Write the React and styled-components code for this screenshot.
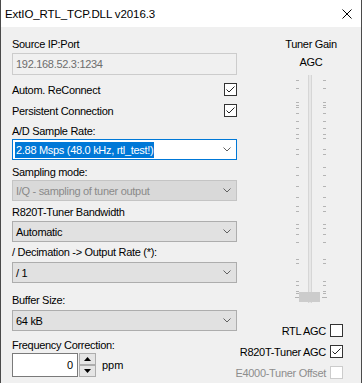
import styled, { createGlobalStyle } from "styled-components";

const GlobalStyle = createGlobalStyle`
  html, body {
    margin: 0;
    padding: 0;
    background: #f0f0f0;
  }
  body {
    font-family: "Liberation Sans", Arial, sans-serif;
    font-size: 11px;
    color: #000;
  }
`;

const Window = styled.div`
  width: 362px;
  height: 383px;
  box-sizing: border-box;
  border-left: 1px solid #4a4a4a;
  border-right: 1px solid #4a4a4a;
  background: #f0f0f0;
  display: flex;
  flex-direction: column;
  overflow: hidden;
`;

const TitleBar = styled.div`
  height: 27px;
  flex: none;
  background: #fff;
  display: flex;
  align-items: center;
  justify-content: space-between;
  padding: 0 9px 0 4px;
  font-size: 11.5px;
  letter-spacing: -0.1px;
`;

const Body = styled.div`
  flex: 1;
  display: flex;
  flex-direction: row;
  padding-left: 11px;
  min-height: 0;
`;

const LeftCol = styled.div`
  width: 225px;
  flex: none;
  display: flex;
  flex-direction: column;
`;

const RightCol = styled.div`
  flex: 1;
  min-width: 0;
  display: flex;
  flex-direction: column;
`;

const Label = styled.div`
  height: 16px;
  line-height: 16px;
  margin-top: ${(p) => p.$mt || 0}px;
  letter-spacing: -0.3px;
  white-space: nowrap;
  color: ${(p) => (p.$disabled ? "#8d8d8d" : "#000")};
`;

const TextBox = styled.div`
  height: 22px;
  margin-top: ${(p) => p.$mt || 0}px;
  box-sizing: border-box;
  border: 1px solid #cccccc;
  background: #f0f0f0;
  color: #6d6d6d;
  padding-left: 3px;
  display: flex;
  align-items: center;
  letter-spacing: -0.3px;
`;

const CheckRow = styled.div`
  height: 21px;
  margin-top: ${(p) => p.$mt || 0}px;
  display: flex;
  align-items: center;
  justify-content: ${(p) => (p.$end ? "flex-end" : "space-between")};
  gap: 4px;
  white-space: nowrap;
  letter-spacing: -0.3px;
  padding-right: ${(p) => (p.$end ? 18 : 0)}px;
`;

const Box = styled.span`
  width: 13px;
  height: 13px;
  box-sizing: border-box;
  border: 1px solid ${(p) => (p.$disabled ? "#cccccc" : "#333333")};
  background: #fff;
  flex: none;
  display: flex;
`;

const Combo = styled.div`
  height: 21px;
  margin-top: ${(p) => p.$mt || 0}px;
  box-sizing: border-box;
  border: 1px solid ${(p) => (p.$focus ? "#0078d7" : p.$disabled ? "#c4c4c4" : "#adadad")};
  background: ${(p) => (p.$focus ? "#fff" : p.$disabled ? "#d9d9d9" : "#e1e1e1")};
  color: ${(p) => (p.$disabled ? "#8a8a8a" : "#000")};
  display: flex;
  align-items: center;
  justify-content: space-between;
  padding: 0 5px 0 3px;
  letter-spacing: -0.3px;
  white-space: nowrap;
`;

const Highlight = styled.span`
  background: #0078d7;
  color: #fff;
  margin-left: -1px;
  padding: 1px 1px;
  line-height: 14px;
`;

const SpinRow = styled.div`
  display: flex;
  align-items: center;
  height: 24px;
`;

const SpinInput = styled.div`
  width: 66px;
  height: 24px;
  box-sizing: border-box;
  border: 1px solid #7a7a7a;
  background: #fff;
  display: flex;
  align-items: center;
  justify-content: flex-end;
  padding-right: 4px;
`;

const SpinButtons = styled.div`
  width: 17px;
  height: 24px;
  margin-left: 1px;
  display: flex;
  flex-direction: column;
`;

const SpinBtn = styled.div`
  flex: 1;
  box-sizing: border-box;
  border: 1px solid #adadad;
  background: #e5e5e5;
  display: flex;
  align-items: center;
  justify-content: center;
`;

const Unit = styled.span`
  margin-left: 6px;
`;

const GainBlock = styled.div`
  padding-left: 24px;
  display: flex;
  flex-direction: column;
  align-items: center;
`;

const CheckGroup = styled.div`
  margin-top: auto;
  display: flex;
  flex-direction: column;
`;

const Chevron = () => (
  <svg width="8" height="5" viewBox="0 0 8 5">
    <polyline points="0.5,0.5 4,4 7.5,0.5" fill="none" stroke="#606060" strokeWidth="1" />
  </svg>
);

const Check = ({ checked, disabled }) => (
  <Box $disabled={disabled}>
    {checked && (
      <svg width="11" height="11" viewBox="0 0 11 11">
        <polyline points="1.5,5.5 4,8 9.5,2.5" fill="none" stroke="#222" strokeWidth="1" />
      </svg>
    )}
  </Box>
);

const Arrow = ({ up }) => (
  <svg width="7" height="4" viewBox="0 0 7 4">
    <polygon points={up ? "0,4 7,4 3.5,0" : "0,0 7,0 3.5,4"} fill="#000" />
  </svg>
);

const ticks = [8, 16, 30, 33, 35, 41, 49, 56, 62, 66, 77, 82, 95, 103, 114, 125, 134, 139, 152, 156, 162, 170, 187, 191, 209, 213, 219, 221];

const GainSlider = () => (
  <svg width="40" height="234" viewBox="0 0 40 234" style={{ marginTop: 2 }}>
    <rect x="17" y="3" width="4" height="228" fill="#e7e7e7" />
    <rect x="17" y="3" width="1" height="228" fill="#d6d6d6" />
    <rect x="20" y="3" width="1" height="228" fill="#d6d6d6" />
    {ticks.map((t) => (
      <g key={t} fill="#b4b4b4">
        <rect x="5" y={t} width="3" height="1" />
        <rect x="32" y={t} width="3" height="1" />
      </g>
    ))}
    <rect x="4" y="225" width="5" height="1" fill="#b4b4b4" />
    <rect x="31" y="225" width="5" height="1" fill="#b4b4b4" />
    <rect x="8" y="220" width="21" height="10" fill="#cccccc" />
  </svg>
);

export default function App() {
  return (
    <>
      <GlobalStyle />
      <Window>
        <TitleBar>
          <span>ExtIO_RTL_TCP.DLL v2016.3</span>
          <svg width="10" height="10" viewBox="0 0 10 10">
            <path d="M0.5 0.5 L9.5 9.5 M9.5 0.5 L0.5 9.5" stroke="#000" strokeWidth="1" />
          </svg>
        </TitleBar>
        <Body>
          <LeftCol>
            <Label $mt={9}>Source IP:Port</Label>
            <TextBox $mt={1}>192.168.52.3:1234</TextBox>
            <CheckRow $mt={4}>
              <span>Autom. ReConnect</span>
              <Check checked />
            </CheckRow>
            <CheckRow>
              <span>Persistent Connection</span>
              <Check checked />
            </CheckRow>
            <Label $mt={2}>A/D Sample Rate:</Label>
            <Combo $focus>
              <Highlight>2.88 Msps (48.0 kHz, rtl_test!)</Highlight>
              <Chevron />
            </Combo>
            <Label $mt={4}>Sampling mode:</Label>
            <Combo $disabled>
              <span>I/Q - sampling of tuner output</span>
              <Chevron />
            </Combo>
            <Label $mt={3}>R820T-Tuner Bandwidth</Label>
            <Combo $mt={1}>
              <span>Automatic</span>
              <Chevron />
            </Combo>
            <Label $mt={2}>/ Decimation -&gt; Output Rate (*):</Label>
            <Combo $mt={2}>
              <span>/ 1</span>
              <Chevron />
            </Combo>
            <Label $mt={9}>Buffer Size:</Label>
            <Combo $mt={2}>
              <span>64 kB</span>
              <Chevron />
            </Combo>
            <Label $mt={6}>Frequency Correction:</Label>
            <SpinRow>
              <SpinInput>0</SpinInput>
              <SpinButtons>
                <SpinBtn>
                  <Arrow up />
                </SpinBtn>
                <SpinBtn>
                  <Arrow />
                </SpinBtn>
              </SpinButtons>
              <Unit>ppm</Unit>
            </SpinRow>
          </LeftCol>
          <RightCol>
            <GainBlock>
              <Label $mt={9}>Tuner Gain</Label>
              <Label $mt={2}>AGC</Label>
              <GainSlider />
            </GainBlock>
            <CheckGroup>
              <CheckRow $end>
                <span>RTL AGC</span>
                <Check />
              </CheckRow>
              <CheckRow $end>
                <span>R820T-Tuner AGC</span>
                <Check checked />
              </CheckRow>
              <CheckRow $end>
                <Label $disabled>E4000-Tuner Offset</Label>
                <Check disabled />
              </CheckRow>
            </CheckGroup>
          </RightCol>
        </Body>
      </Window>
    </>
  );
}
